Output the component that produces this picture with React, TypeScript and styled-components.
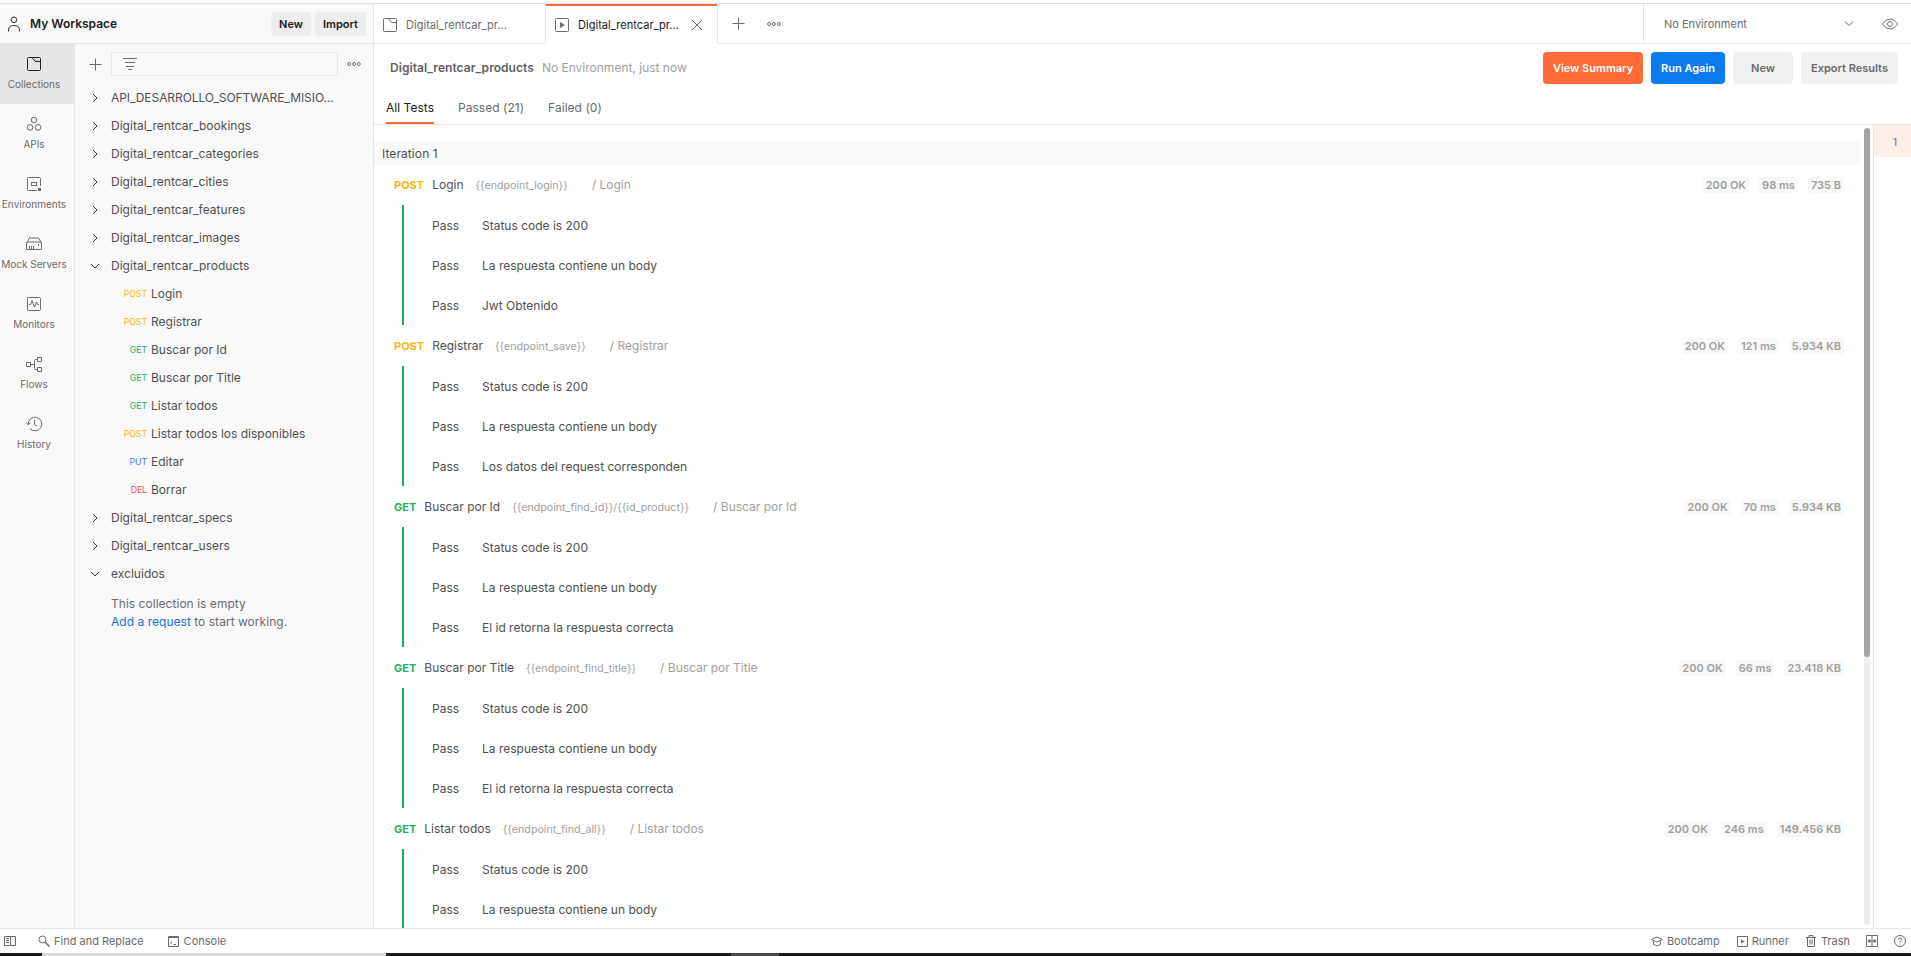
import React from "react";
import styled, { createGlobalStyle } from "styled-components";

const GlobalStyle = createGlobalStyle`
  * { box-sizing: border-box; }
  body { margin: 0; overflow: hidden; }
`;

const Page = styled.div`
  width: 1911px;
  height: 956px;
  display: flex;
  flex-direction: column;
  overflow: hidden;
  background: #fff;
  color: #505050;
  font: 400 12px/16px Inter, sans-serif;
  padding-top: 3px;
  white-space: nowrap;
`;
const TopRow = styled.header`
  height: 41px;
  flex: none;
  display: flex;
  border-top: 1px solid #e2e2e2;
`;
const Workspace = styled.div`
  width: 374px;
  display: flex;
  align-items: center;
  padding: 0 7px 0 7px;
  background: #f9f9f9;
  border-right: 1px solid #e6e6e6;
  border-bottom: 1px solid #e6e6e6;
`;
const WorkspaceName = styled.div`
  flex: 1;
  margin-left: 9px;
  font-size: 12px;
  font-weight: 600;
  color: #212121;
`;
const SmallButton = styled.button<{ w: number }>`
  width: ${(p) => p.w}px;
  height: 24px;
  margin-left: 4px;
  padding: 0;
  border: 0;
  border-radius: 3px;
  background: #ededed;
  font: 600 11px/16px Inter, sans-serif;
  color: #212121;
`;
const FileTab = styled.div<{ active?: boolean }>`
  width: 172px;
  display: flex;
  align-items: center;
  padding: 2px 14px 0 8px;
  font-size: 11.1px;
  color: ${(p) => (p.active ? "#212121" : "#6b6b6b")};
  border-right: 1px solid #e6e6e6;
  border-bottom: 1px solid ${(p) => (p.active ? "#fff" : "#e6e6e6")};
  box-shadow: ${(p) => (p.active ? "inset 0 2px #f26b3a" : "none")};
`;
const FileName = styled.span`
  margin-left: 8px;
  flex: 1;
`;
const TabTools = styled.div`
  flex: 1;
  display: flex;
  align-items: center;
  padding-left: 14px;
  gap: 22px;
  border-bottom: 1px solid #e6e6e6;
`;
const EnvPicker = styled.div`
  width: 268px;
  display: flex;
  align-items: center;
  padding: 0 13px 0 20px;
  border-left: 1px solid #e6e6e6;
  border-bottom: 1px solid #e6e6e6;
  font-size: 11px;
  color: #6b6b6b;
`;
const EnvIcons = styled.div`
  display: flex;
  align-items: center;
  gap: 28px;
`;
const Spacer = styled.div`
  flex: 1;
`;
const Body = styled.div`
  flex: 1;
  min-height: 0;
  display: flex;
`;
const Nav = styled.nav`
  width: 75px;
  background: #f9f9f9;
  border-right: 1px solid #e6e6e6;
`;
const NavItem = styled.div<{ active?: boolean }>`
  height: 60px;
  padding: 10px 6px 0 0;
  display: flex;
  flex-direction: column;
  align-items: center;
  gap: 2px;
  font-size: 10px;
  color: #6b6b6b;
  background: ${(p) => (p.active ? "#e6e6e6" : "transparent")};
`;
const Sidebar = styled.aside`
  width: 299px;
  background: #f9f9f9;
  border-right: 1px solid #e6e6e6;
`;
const FilterRow = styled.div`
  height: 40px;
  display: flex;
  align-items: center;
  padding: 0 12px 0 14px;
`;
const FilterBox = styled.div`
  width: 227px;
  height: 24px;
  margin: 0 9px;
  border: 1px solid #e9e9e9;
  padding-left: 11px;
  display: flex;
  align-items: center;
`;
const TreeRow = styled.div`
  height: 28px;
  display: flex;
  align-items: center;
  padding-left: 13px;
`;
const TreeName = styled.span<{ tight?: boolean }>`
  margin-left: 9px;
  letter-spacing: ${(p) => (p.tight ? "-0.07px" : "0.02px")};
`;
const methodColors: Record<string, string> = {
  POST: "#fab515",
  GET: "#1fb05c",
  PUT: "#3b82e0",
  DEL: "#e8534a",
};
const ChildRow = styled.div`
  height: 28px;
  display: flex;
  align-items: center;
`;
const MiniMethod = styled.span<{ m: string }>`
  width: 72px;
  margin-right: 4px;
  text-align: right;
  font-size: 8.8px;
  letter-spacing: -0.1px;
  color: ${(p) => methodColors[p.m]};
`;
const EmptyNote = styled.p`
  margin: 7px 0 0 36px;
  line-height: 18px;
  letter-spacing: 0.03px;
  color: #6b6b6b;
`;
const Link = styled.span`
  color: #1673dc;
`;
const Main = styled.main`
  flex: 1;
  min-width: 0;
  display: flex;
  flex-direction: column;
`;
const RunHeader = styled.div`
  height: 48px;
  display: flex;
  align-items: center;
  padding: 0 13px 0 16px;
  gap: 8px;
`;
const RunTitle = styled.strong`
  font-weight: 600;
  letter-spacing: 0.05px;
  color: #616161;
`;
const Muted = styled.span`
  color: #a0a0a0;
`;
const Button = styled.button<{ w: number; bg: string; fg: string }>`
  width: ${(p) => p.w}px;
  height: 32px;
  padding: 0;
  border: 0;
  border-radius: 4px;
  background: ${(p) => p.bg};
  color: ${(p) => p.fg};
  font: 600 11px/16px Inter, sans-serif;
`;
const Filters = styled.div`
  height: 33px;
  display: flex;
  gap: 24px;
  padding-left: 12px;
  border-bottom: 1px solid #e6e6e6;
`;
const FilterTab = styled.div<{ active?: boolean }>`
  padding-top: 8px;
  letter-spacing: 0.03px;
  color: ${(p) => (p.active ? "#212121" : "#6b6b6b")};
  border-bottom: 2px solid ${(p) => (p.active ? "#f26b3a" : "transparent")};
`;
const Results = styled.div`
  flex: 1;
  min-height: 0;
  display: flex;
`;
const ResultList = styled.div`
  width: 1486px;
  padding-top: 16px;
  overflow: hidden;
`;
const Iteration = styled.div`
  height: 24px;
  line-height: 25px;
  padding-left: 8px;
  letter-spacing: 0.08px;
  background: #f9f9f9;
`;
const Request = styled.section`
  height: 161px;
`;
const RequestHead = styled.div`
  height: 40px;
  display: flex;
  align-items: center;
  padding: 0 16px 0 20px;
`;
const Method = styled.span<{ m: string }>`
  margin-right: 8px;
  font-size: 11px;
  font-weight: 700;
  color: ${(p) => methodColors[p.m]};
`;
const Url = styled.span`
  margin: 0 24px 0 12px;
  padding-top: 2px;
  font-size: 10.7px;
  color: #a0a0a0;
`;
const Stat = styled.span`
  height: 16px;
  margin-left: 10px;
  padding: 0 3px;
  border-radius: 2px;
  background: #f8f8f8;
  font-size: 11px;
  font-weight: 600;
  color: #a0a0a0;
`;
const Tests = styled.div`
  margin-left: 28px;
  border-left: 2px solid #1fb05c;
`;
const Test = styled.div`
  height: 40px;
  display: flex;
  align-items: center;
  padding: 2px 0 0 28px;
`;
const TestStatus = styled.span`
  width: 50px;
`;
const ScrollTrack = styled.div`
  width: 6px;
  margin: 3px 3px 3px 4px;
  border-radius: 3px;
  background: #ededed;
`;
const ScrollThumb = styled.div`
  height: 529px;
  border-radius: 3px;
  background: #a6a6a6;
`;
const Iterations = styled.div`
  width: 38px;
  border-left: 1px solid #e6e6e6;
`;
const IterationCell = styled.div`
  height: 32px;
  padding-left: 19px;
  line-height: 34px;
  font-size: 10px;
  background: #ffefe9;
  color: #6b6b6b;
`;
const StatusBar = styled.footer`
  height: 25px;
  flex: none;
  display: flex;
  align-items: center;
  padding: 0 5px 0 4px;
  border-top: 1px solid #e6e6e6;
  font-size: 11px;
  color: #6b6b6b;
`;
const StatusItem = styled.div<{ ml?: number }>`
  display: flex;
  align-items: center;
  gap: 4px;
  margin-left: ${(p) => p.ml ?? 0}px;
`;
const Taskbar = styled.div`
  height: 3px;
  flex: none;
  display: flex;
  background: #1b1a1c;
`;
const TaskbarPiece = styled.div<{ l: number; w: number; c: string }>`
  width: ${(p) => p.w}px;
  margin-left: ${(p) => p.l}px;
  background: ${(p) => p.c};
`;

const IconSvg = styled.svg`
  flex: none;
  display: block;
`;
const Svg = ({ w, h = w, c = "#6b6b6b", children }: { w: number; h?: number; c?: string; children: React.ReactNode }) => (
  <IconSvg width={w} height={h} viewBox={`0 0 ${w} ${h}`} fill="none" stroke={c} strokeWidth="1">
    {children}
  </IconSvg>
);
const Plus = () => <Svg w={13} c="#6b6b6b"><path d="M6.500.5v12M.5 6.500h12" /></Svg>;
const Dots = () => (
  <Svg w={14} h={6}><circle cx="2.2" cy="3" r="1.5" /><circle cx="7" cy="3" r="1.5" /><circle cx="11.8" cy="3" r="1.5" /></Svg>
);
const Folder = () => (
  <Svg w={16}><path d="M1.500 2.500q0-1 1-1h3.700L9.500 5.500h5M6.200 1.500h7.300q1 0 1 1v11q0 1-1 1h-11q-1 0-1-1v-11" /></Svg>
);
const Play = () => (
  <Svg w={16}><rect x="1.5" y="1.5" width="13" height="13" rx="1" /><path d="M6 5l5 3-5 3z" fill="#6b6b6b" stroke="none" /></Svg>
);
const Chevron = ({ open }: { open?: boolean }) => (
  <Svg w={14} c="#333">{open ? <path d="M3 5l4 4 4-4" /> : <path d="M5 3l4 4-4 4" />}</Svg>
);

const navIcons: [string, React.ReactNode][] = [
  ["Collections", <Svg w={20} c="#212121"><path d="M3.500 4.500q0-1 1-1h3.700l3 4h5.300M8.200 3.500h7.300q1 0 1 1v11q0 1-1 1h-11q-1 0-1-1v-11" /></Svg>],
  ["APIs", <Svg w={20}><circle cx="10" cy="6" r="2.800" /><circle cx="6" cy="13.400" r="2.800" /><circle cx="14" cy="13.400" r="2.800" /></Svg>],
  ["Environments", <Svg w={20}><path d="M16.500 12V4.500q0-1-1-1h-11q-1 0-1 1v11q0 1 1 1H13" /><rect x="7.500" y="8.500" width="5" height="3" /><path d="M14 14h3v3h-3z" fill="#6b6b6b" stroke="none" /></Svg>],
  ["Mock Servers", <Svg w={20}><path d="M2.500 9.500l2.500-5q.3-.5 1-.5h8q.700 0 1 .5l2.500 5v5.500q0 .5-.5.500h-14q-.5 0-.5-.5v-5.500q0-1.500 1-1.500h13q1 0 1 1.500M5.500 12v3M7.500 12v3M9.500 12v3M14.500 10v2" /></Svg>],
  ["Monitors", <Svg w={20}><rect x="3.500" y="3.500" width="13" height="13" rx="1" /><path d="M5 10.500h1.500l1.500-4 2.500 6.500 2-5 1.200 2.500H15" /></Svg>],
  ["Flows", <Svg w={20}><path d="M2.500 8.500h4v4h-4zM13.500 3.500h4v4h-4zM13.500 13.500h4v4h-4zM6.500 10.500h4M13.500 5.500h-2q-1 0-1 1v8q0 1 1 1h2" /></Svg>],
  ["History", <Svg w={20}><path d="M4.200 10a6.800 6.800 0 1 1 2 4.800M2.200 8.500l2 2.300 2.300-2M10.500 6v4.500l2.500 1.500" /></Svg>],
];

const children: [string, string][] = [
  ["POST", "Login"], ["POST", "Registrar"], ["GET", "Buscar por Id"], ["GET", "Buscar por Title"],
  ["GET", "Listar todos"], ["POST", "Listar todos los disponibles"], ["PUT", "Editar"], ["DEL", "Borrar"],
];
const collections: { name: string; open?: boolean; tight?: boolean; items?: [string, string][] }[] = [
  { name: "API_DESARROLLO_SOFTWARE_MISIO...", tight: true },
  { name: "Digital_rentcar_bookings" },
  { name: "Digital_rentcar_categories" },
  { name: "Digital_rentcar_cities" },
  { name: "Digital_rentcar_features" },
  { name: "Digital_rentcar_images" },
  { name: "Digital_rentcar_products", open: true, items: children },
  { name: "Digital_rentcar_specs" },
  { name: "Digital_rentcar_users" },
  { name: "excluidos", open: true },
];
const ok = "Status code is 200";
const hasBody = "La respuesta contiene un body";
const sameId = "El id retorna la respuesta correcta";
const requests = [
  { m: "POST", name: "Login", url: "{{endpoint_login}}", stats: ["200 OK", "98 ms", "735 B"], tests: [ok, hasBody, "Jwt Obtenido"] },
  { m: "POST", name: "Registrar", url: "{{endpoint_save}}", stats: ["200 OK", "121 ms", "5.934 KB"], tests: [ok, hasBody, "Los datos del request corresponden"] },
  { m: "GET", name: "Buscar por Id", url: "{{endpoint_find_id}}/{{id_product}}", stats: ["200 OK", "70 ms", "5.934 KB"], tests: [ok, hasBody, sameId] },
  { m: "GET", name: "Buscar por Title", url: "{{endpoint_find_title}}", stats: ["200 OK", "66 ms", "23.418 KB"], tests: [ok, hasBody, sameId] },
  { m: "GET", name: "Listar todos", url: "{{endpoint_find_all}}", stats: ["200 OK", "246 ms", "149.456 KB"], tests: [ok, hasBody] },
];

export default function App() {
  return (
    <Page>
      <GlobalStyle />
      <TopRow>
        <Workspace>
          <Svg w={14} h={16} c="#333"><circle cx="7" cy="3.800" r="2.800" /><path d="M1.500 15.500v-1.500q0-4.500 5.500-4.500t5.500 4.500v1.500" /></Svg>
          <WorkspaceName>My Workspace</WorkspaceName>
          <SmallButton w={40}>New</SmallButton>
          <SmallButton w={51}>Import</SmallButton>
        </Workspace>
        <FileTab><Folder /><FileName>Digital_rentcar_pr...</FileName></FileTab>
        <FileTab active>
          <Play /><FileName>Digital_rentcar_pr...</FileName>
          <Svg w={12}><path d="M1 1l10 10M11 1L1 11" /></Svg>
        </FileTab>
        <TabTools><Plus /><Dots /></TabTools>
        <EnvPicker>
          No Environment
          <Spacer />
          <EnvIcons>
            <Svg w={10} h={6}><path d="M1 .500l4 4 4-4" /></Svg>
            <Svg w={16} h={12}><path d="M.5 6Q3.500 1 8 1t7.500 5Q12.500 11 8 11T.5 6z" /><circle cx="8" cy="6" r="2.500" /></Svg>
          </EnvIcons>
        </EnvPicker>
      </TopRow>
      <Body>
        <Nav>
          {navIcons.map(([label, icon], i) => (
            <NavItem key={label} active={i === 0}>{icon}<span>{label}</span></NavItem>
          ))}
        </Nav>
        <Sidebar>
          <FilterRow>
            <Plus />
            <FilterBox><Svg w={14} h={12}><path d="M0 .5h14M2 4.500h10M3 8.500h8M5 11.500h4" /></Svg></FilterBox>
            <Dots />
          </FilterRow>
          {collections.map((c) => (
            <React.Fragment key={c.name}>
              <TreeRow><Chevron open={c.open} /><TreeName tight={c.tight}>{c.name}</TreeName></TreeRow>
              {c.items?.map(([m, n]) => (
                <ChildRow key={n}><MiniMethod m={m}>{m}</MiniMethod>{n}</ChildRow>
              ))}
            </React.Fragment>
          ))}
          <EmptyNote>This collection is empty<br /><Link>Add a request</Link> to start working.</EmptyNote>
        </Sidebar>
        <Main>
          <RunHeader>
            <RunTitle>Digital_rentcar_products</RunTitle>
            <Muted>No Environment, just now</Muted>
            <Spacer />
            <Button w={100} bg="#ff6c37" fg="#fff">View Summary</Button>
            <Button w={74} bg="#097bed" fg="#fff">Run Again</Button>
            <Button w={60} bg="#f1f1f1" fg="#6b6b6b">New</Button>
            <Button w={97} bg="#f1f1f1" fg="#6b6b6b">Export Results</Button>
          </RunHeader>
          <Filters>
            <FilterTab active>All Tests</FilterTab>
            <FilterTab>Passed (21)</FilterTab>
            <FilterTab>Failed (0)</FilterTab>
          </Filters>
          <Results>
            <ResultList>
              <Iteration>Iteration 1</Iteration>
              {requests.map((r) => (
                <Request key={r.name}>
                  <RequestHead>
                    <Method m={r.m}>{r.m}</Method>
                    {r.name}
                    <Url>{r.url}</Url>
                    <Muted>/ {r.name}</Muted>
                    <Spacer />
                    {r.stats.map((s) => <Stat key={s}>{s}</Stat>)}
                  </RequestHead>
                  <Tests>
                    {r.tests.map((t) => (
                      <Test key={t}><TestStatus>Pass</TestStatus>{t}</Test>
                    ))}
                  </Tests>
                </Request>
              ))}
            </ResultList>
            <ScrollTrack><ScrollThumb /></ScrollTrack>
            <Iterations><IterationCell>1</IterationCell></Iterations>
          </Results>
        </Main>
      </Body>
      <StatusBar>
        <Svg w={12} h={10}><path d="M.5.5h11v9H.5zM6.500.5v9M2 2.500h3M2 4.500h3M2 6.500h3" /></Svg>
        <StatusItem ml={22}><Svg w={12}><circle cx="4.500" cy="4.500" r="3.500" /><path d="M7 7l4.500 4.500" strokeWidth="1.500" /></Svg>Find and Replace</StatusItem>
        <StatusItem ml={24}><Svg w={11}><path d="M.5.5h10v10H.5zM.5 1.500h10M2.500 5l1.500 1.500L2.500 8M5.500 8.500h2.500" /></Svg><span>&#8202;Console</span></StatusItem>
        <Spacer />
        <StatusItem><Svg w={12} h={11}><path d="M.5 3.500L6 1l5.500 2.500L6 6zM2.500 4.500v4Q6 11 9.500 8.500v-4" /></Svg>Bootcamp</StatusItem>
        <StatusItem ml={17}><Svg w={11}><path d="M.5.5h10v10H.5z" /><path d="M4 3.500l3.500 2L4 7.500z" fill="#6b6b6b" stroke="none" /></Svg>Runner</StatusItem>
        <StatusItem ml={17}><Svg w={10} h={12}><path d="M0 2.500h10M3 2V.5h4V2M1.500 2.500v9h7v-9M4 4.500v5M6 4.500v5" /></Svg><span>&#8202;Trash</span></StatusItem>
        <StatusItem ml={16}><Svg w={12}><path d="M.5.5h11v11H.5zM6 .5v11M1.500 6h9" /><path d="M2.500 4.500h2v3h-2zM7.500 4.500h2v3h-2z" fill="#6b6b6b" stroke="none" /></Svg></StatusItem>
        <StatusItem ml={16}><Svg w={12}><circle cx="6" cy="6" r="5.500" /><path d="M4.300 4.700Q4.300 3 6 3t1.700 1.600Q7.700 5.500 6 6.300V7.300M6 8.500v1" /></Svg></StatusItem>
      </StatusBar>
      <Taskbar>
        <TaskbarPiece l={42} w={344} c="#dcdcdc" />
        <TaskbarPiece l={345} w={48} c="#4a494b" />
      </Taskbar>
    </Page>
  );
}
